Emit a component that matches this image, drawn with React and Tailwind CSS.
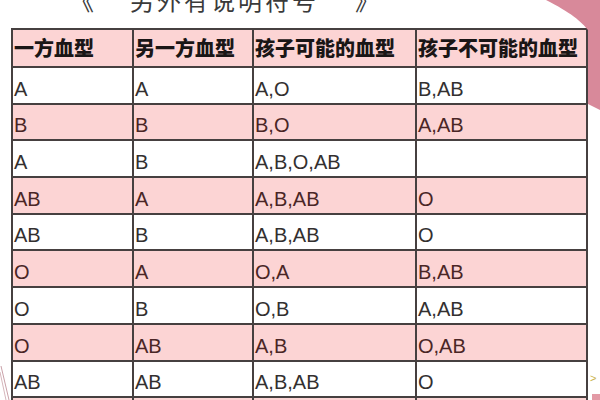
const rows = [
    ['A', 'A', 'A,O', 'B,AB'],
    ['B', 'B', 'B,O', 'A,AB'],
    ['A', 'B', 'A,B,O,AB', ''],
    ['AB', 'A', 'A,B,AB', 'O'],
    ['AB', 'B', 'A,B,AB', 'O'],
    ['O', 'A', 'O,A', 'B,AB'],
    ['O', 'B', 'O,B', 'A,AB'],
    ['O', 'AB', 'A,B', 'O,AB'],
    ['AB', 'AB', 'A,B,AB', 'O'],
    ['', '', '', ''],
];

const headers = ['一方血型', '另一方血型', '孩子可能的血型', '孩子不可能的血型'];

export default function App() {
    return (
        <div className="relative w-[600px] h-[400px] overflow-hidden bg-white font-['Liberation_Sans','Noto_Sans_CJK_SC',sans-serif]">
            {/* cut-off title */}
            <div className="absolute left-[70px] top-[-18px] flex gap-[36px] text-[24px] text-[#3a3a3a] font-['Noto_Sans_CJK_SC',sans-serif] whitespace-nowrap">
                <span>《</span>
                <span className="tracking-[3px]">另外有说明符号</span>
                <span>》</span>
            </div>

            {/* pink decoration, top right */}
            <svg className="absolute right-0 top-0" width="60" height="110" viewBox="0 0 60 110">
                <path d="M6 0 H60 V110 L48 104 V30 C42 22 30 12 6 0 Z" fill="#d8899a" />
            </svg>

            {/* faint lines, bottom left */}
            <svg className="absolute left-0 top-[362px]" width="14" height="38" viewBox="0 0 14 38">
                <path d="M1 4 L9 38" stroke="#c9a0a8" strokeWidth="1" />
                <path d="M0 10 L6 38" stroke="#d6b6bb" strokeWidth="1" />
            </svg>
            <span className="absolute left-[590px] top-[370px] text-[11px] text-[#c9b24a]">&gt;</span>
            <div className="absolute left-[592px] top-[394px] w-[8px] h-[6px] bg-[#e39aa6]" />

            <div className="pt-[28px] pl-[11px]">
                <div className="grid grid-cols-[121px_120px_163px_171px] border-l-2 border-t-2 border-[#464040]">
                    {headers.map((h, i) => (
                        <div
                            key={i}
                            className="h-[38px] bg-[#fcd4d4] border-r-2 border-b-2 border-[#464040] flex items-center pl-[1px] text-[20px] font-black text-[#1a1616] font-['Noto_Sans_CJK_SC',sans-serif] whitespace-nowrap"
                        >
                            {h}
                        </div>
                    ))}
                    {rows.map((r, ri) =>
                        r.map((c, ci) => (
                            <div
                                key={ri + '-' + ci}
                                className={
                                    'h-[36.7px] border-r-2 border-b-2 border-[#464040] flex items-end pb-[4px] pl-[1px] text-[20px] leading-none whitespace-nowrap ' +
                                    (ri % 2 === 1 ? 'bg-[#fcd4d4] text-[#4a2626]' : 'bg-white text-[#333030]')
                                }
                            >
                                {c}
                            </div>
                        ))
                    )}
                </div>
            </div>
        </div>
    );
}
